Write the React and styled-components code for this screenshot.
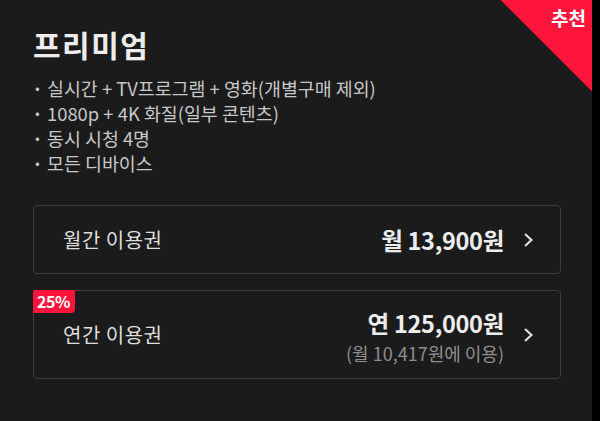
import React from "react";
import styled, { createGlobalStyle } from "styled-components";

const Global = createGlobalStyle`
  html, body { margin: 0; padding: 0; background: #000; }
  body { font-family: "Noto Sans CJK KR", "Noto Sans", sans-serif; }
`;

const Page = styled.div`
  width: 600px;
  height: 421px;
  background: #000;
  display: flex;
`;

const Card = styled.div`
  position: relative;
  width: 592px;
  height: 421px;
  background: #1b1b1b;
  box-sizing: border-box;
  padding: 22px 31px 0 33px;
  overflow: hidden;
`;

const Ribbon = styled.div`
  position: absolute;
  top: 0;
  right: 0;
  width: 92px;
  height: 92px;
  background: linear-gradient(to bottom left, #ff153c 50%, transparent 50%);
`;

const RibbonText = styled.span`
  position: absolute;
  top: 4px;
  right: 6px;
  color: #fff;
  font-size: 19px;
  font-weight: 700;
`;

const Title = styled.h1`
  margin: 0;
  font-size: 30px;
  font-weight: 700;
  color: #ececec;
  line-height: 44px;
  letter-spacing: 1.5px;
`;

const Features = styled.ul`
  list-style: none;
  margin: 10px 0 0 0;
  padding: 0;
`;

const Feature = styled.li`
  font-size: 18.4px;
  color: #c8c8c8;
  line-height: 25px;
  letter-spacing: 0;
  &::before {
    content: "·";
    display: inline-block;
    width: 15px;
    margin-left: -1px;
    font-weight: 700;
  }
`;

const Plans = styled.div`
  display: flex;
  flex-direction: column;
  gap: 16px;
  margin-top: 29px;
`;

const Plan = styled.div`
  position: relative;
  height: ${(p) => p.$h}px;
  border: 1px solid #3c3c3c;
  border-radius: 4px;
  display: flex;
  align-items: center;
  padding: 0 26px 0 29px;
  box-sizing: border-box;
`;

const Badge = styled.span`
  position: absolute;
  top: -1px;
  left: -1px;
  background: #ff153c;
  color: #fff;
  font-size: 16px;
  font-weight: 700;
  line-height: 23px;
  padding: 0 5px 0 4px;
  border-radius: 3px 0 4px 0;
  letter-spacing: -0.4px;
`;

const Label = styled.span`
  flex: 1;
  font-size: 20px;
  color: #dedede;
  letter-spacing: 0.5px;
`;

const Price = styled.div`
  display: flex;
  flex-direction: column;
  align-items: flex-end;
  margin-top: ${(p) => (p.$stacked ? "3px" : "0")};
`;

const Amount = styled.span`
  font-size: 23.5px;
  font-weight: 700;
  color: #ececec;
  letter-spacing: -0.3px;
  line-height: 34px;
`;

const Sub = styled.span`
  font-size: 18px;
  color: #8f8f8f;
  letter-spacing: 0;
  line-height: 26px;
`;

const Chevron = styled.svg`
  width: 12px;
  height: 18px;
  margin-left: 18px;
  flex: none;
`;

const Arrow = () => (
  <Chevron viewBox="0 0 12 18">
    <path d="M3 3 L9.5 9 L3 15" fill="none" stroke="#e6e6e6" strokeWidth="2" />
  </Chevron>
);

export default function App() {
  return (
    <>
      <Global />
      <Page>
        <Card>
          <Ribbon>
            <RibbonText>추천</RibbonText>
          </Ribbon>
          <Title>프리미엄</Title>
          <Features>
            <Feature>실시간 + TV프로그램 + 영화(개별구매 제외)</Feature>
            <Feature>1080p + 4K 화질(일부 콘텐츠)</Feature>
            <Feature>동시 시청 4명</Feature>
            <Feature>모든 디바이스</Feature>
          </Features>
          <Plans>
            <Plan $h={69}>
              <Label>월간 이용권</Label>
              <Price>
                <Amount>월 13,900원</Amount>
              </Price>
              <Arrow />
            </Plan>
            <Plan $h={89}>
              <Badge>25%</Badge>
              <Label>연간 이용권</Label>
              <Price $stacked>
                <Amount>연 125,000원</Amount>
                <Sub>(월 10,417원에 이용)</Sub>
              </Price>
              <Arrow />
            </Plan>
          </Plans>
        </Card>
      </Page>
    </>
  );
}
